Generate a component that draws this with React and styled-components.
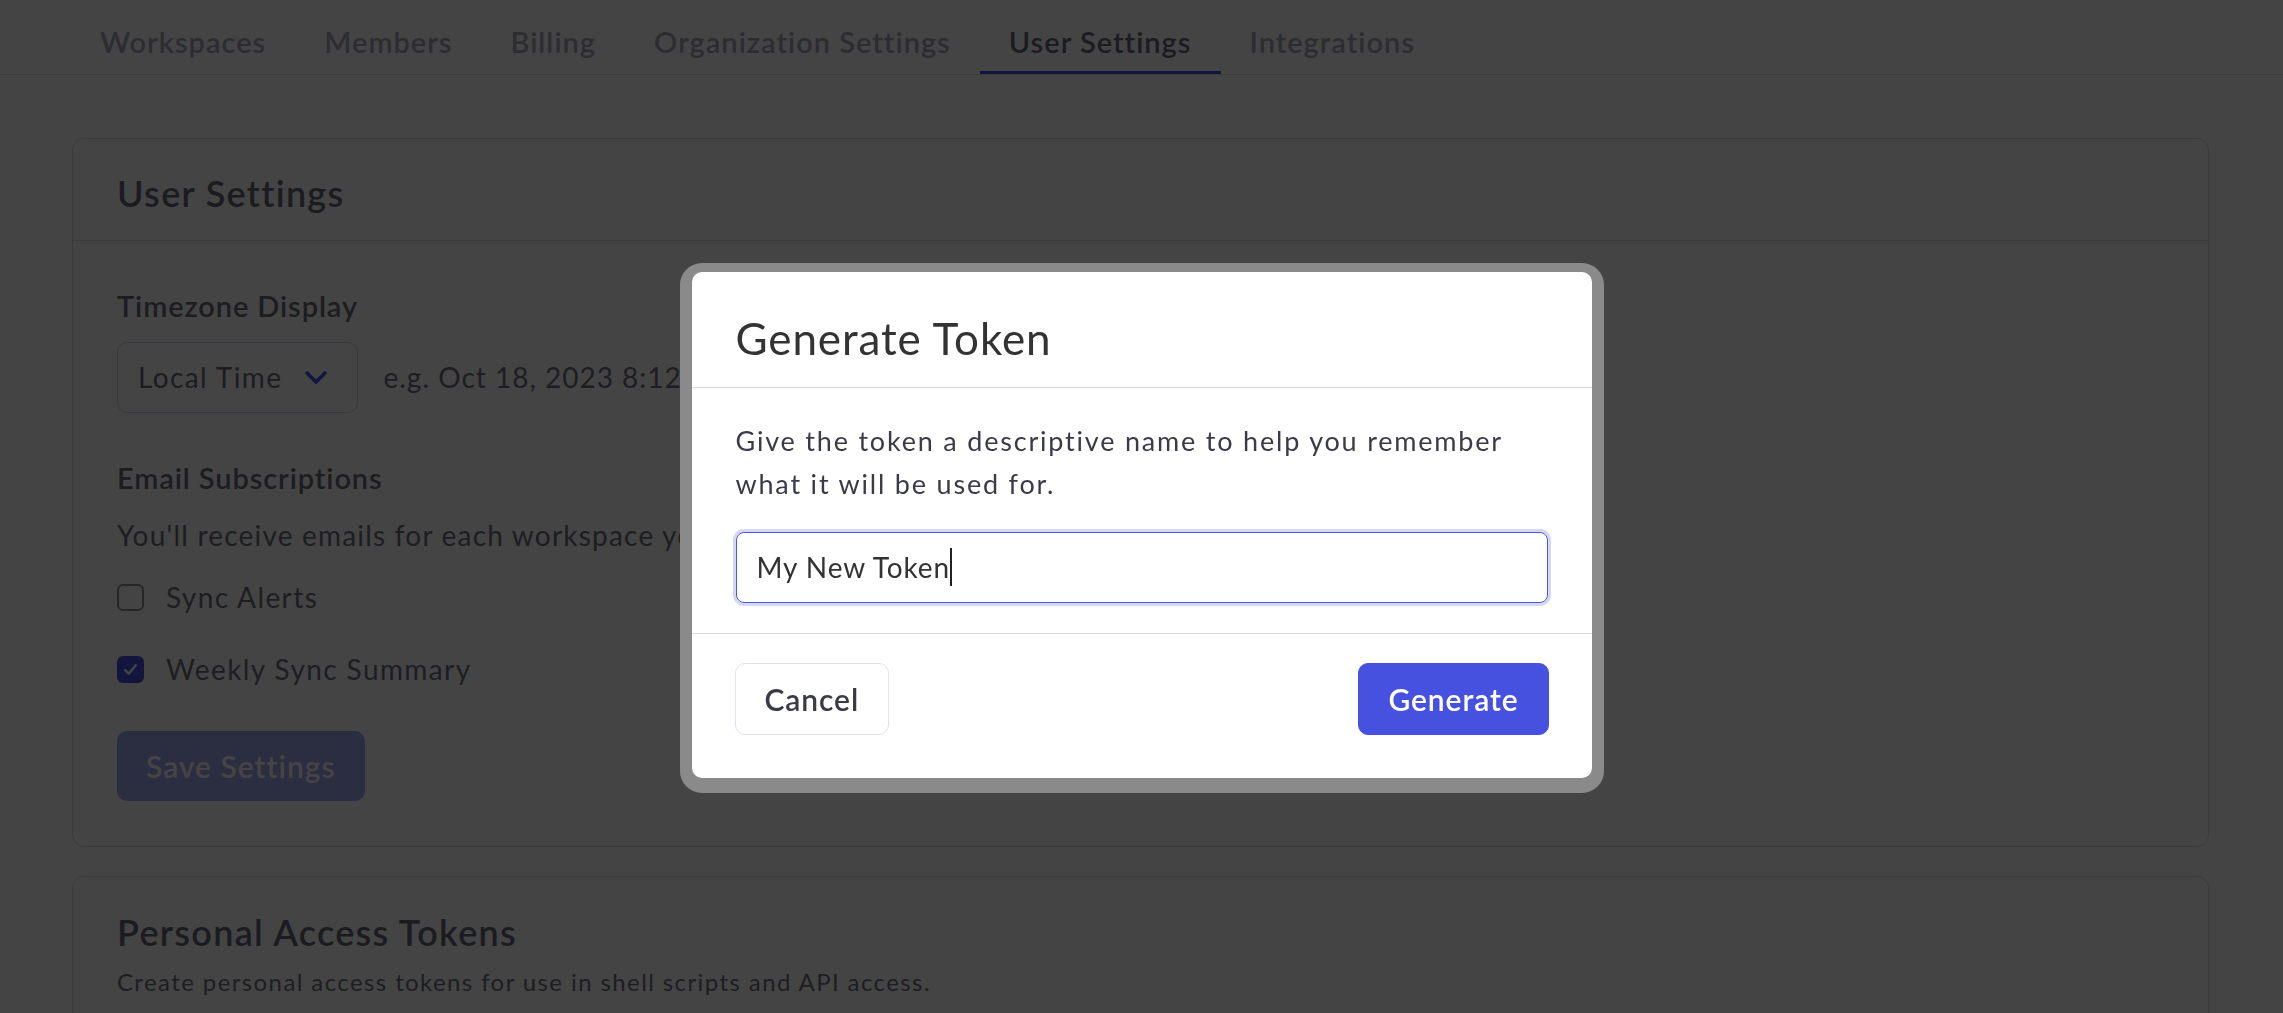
import React from "react";
import styled, { createGlobalStyle } from "styled-components";

const GlobalStyle = createGlobalStyle`
  html, body {
    margin: 0;
    padding: 0;
    background: #ffffff;
    overflow: hidden;
  }
  body {
    font-family: Lato, "Noto Sans", sans-serif;
    color: #717180;
  }
  * {
    box-sizing: border-box;
  }
`;

const tabs = [
  "Workspaces",
  "Members",
  "Billing",
  "Organization Settings",
  "User Settings",
  "Integrations",
];

const ChevronDown = () => (
  <svg width="24" height="15" viewBox="0 0 24 15" fill="none">
    <path
      d="M3 3l9 9 9-9"
      stroke="#4651df"
      strokeWidth="3.6"
      strokeLinecap="round"
      strokeLinejoin="round"
    />
  </svg>
);

const CheckMark = () => (
  <svg width="19" height="19" viewBox="0 0 16 16" fill="none">
    <path
      d="M3.5 8.5l3 3 6-7"
      stroke="#ffffff"
      strokeWidth="2"
      strokeLinecap="round"
      strokeLinejoin="round"
    />
  </svg>
);

const App = () => {
  return (
    <Page>
      <GlobalStyle />
      <TabBar>
        {tabs.map((tab) => (
          <Tab key={tab} $active={tab === "User Settings"}>
            {tab}
          </Tab>
        ))}
      </TabBar>

      <Main>
        <Card>
          <CardHeader $divider>
            <CardTitle>User Settings</CardTitle>
          </CardHeader>
          <CardBody>
            <FieldLabel>Timezone Display</FieldLabel>
            <SelectRow>
              <Select>
                <span>Local Time</span>
                <ChevronDown />
              </Select>
              <Hint>e.g. Oct 18, 2023 8:12 PM</Hint>
            </SelectRow>

            <FieldLabel $spaced>Email Subscriptions</FieldLabel>
            <Text>
              You'll receive emails for each workspace you are a member of.
            </Text>
            <CheckList>
              <CheckRow>
                <Box />
                Sync Alerts
              </CheckRow>
              <CheckRow>
                <Box $checked>
                  <CheckMark />
                </Box>
                Weekly Sync Summary
              </CheckRow>
            </CheckList>
            <SaveButton disabled>Save Settings</SaveButton>
          </CardBody>
        </Card>

        <Card>
          <CardHeader $tight>
            <CardTitle>Personal Access Tokens</CardTitle>
            <Subtitle>
              Create personal access tokens for use in shell scripts and API
              access.
            </Subtitle>
          </CardHeader>
          <TokenList />
        </Card>
      </Main>

      <Overlay>
        <Dialog>
          <DialogHeader>
            <DialogTitle>Generate Token</DialogTitle>
          </DialogHeader>
          <DialogBody>
            <DialogText>
              Give the token a descriptive name to help you remember what it
              will be used for.
            </DialogText>
            <TokenField>
              My New Token
              <Caret />
            </TokenField>
          </DialogBody>
          <DialogFooter>
            <Button>Cancel</Button>
            <Button $primary>Generate</Button>
          </DialogFooter>
        </Dialog>
      </Overlay>
    </Page>
  );
};

const Page = styled.div`
  min-height: 100vh;
  background: #ffffff;
`;

const TabBar = styled.nav`
  display: flex;
  height: 75px;
  padding-left: 71px;
  border-bottom: 1px solid #e1e1e1;
`;

const Tab = styled.a`
  display: block;
  padding: 25px 29px 0;
  font-size: 29px;
  line-height: 1.2;
  font-weight: 600;
  letter-spacing: 1px;
  cursor: pointer;
  color: ${(p) => (p.$active ? "#6a6a78" : "#a8a8b8")};
  border-bottom: 3px solid ${(p) => (p.$active ? "#4651df" : "transparent")};
`;

const Main = styled.main`
  display: flex;
  flex-direction: column;
  gap: 29px;
  padding: 63px 74px 40px 72px;
`;

const Card = styled.section`
  background: #ffffff;
  border: 1px solid #dedee4;
  border-radius: 12px;
`;

const CardHeader = styled.header`
  padding: ${(p) => (p.$tight ? "34px 44px 24px" : "33px 44px 25px")};
  border-bottom: ${(p) => (p.$divider ? "1px solid #dedee4" : "none")};
`;

const CardTitle = styled.h2`
  margin: 0;
  font-size: 36px;
  line-height: 1.2;
  font-weight: 600;
  letter-spacing: 1.3px;
  color: #6a6a78;
`;

const Subtitle = styled.p`
  margin: 13px 0 0;
  font-size: 24px;
  line-height: 1.2;
  letter-spacing: 1.4px;
  color: #717180;
`;

const CardBody = styled.div`
  display: flex;
  flex-direction: column;
  align-items: flex-start;
  padding: 48px 44px 45px;
`;

const TokenList = styled.div`
  min-height: 200px;
`;

const FieldLabel = styled.h3`
  margin: ${(p) => (p.$spaced ? "48px 0 0" : "0")};
  font-size: 29px;
  line-height: 1.2;
  font-weight: 600;
  letter-spacing: 0.9px;
  color: #6c6c7a;
`;

const SelectRow = styled.div`
  display: flex;
  align-items: center;
  gap: 25px;
  margin-top: 18px;
`;

const Select = styled.div`
  display: flex;
  align-items: center;
  gap: 22px;
  height: 71px;
  padding: 0 29px 0 20px;
  border: 1px solid #d6d6ea;
  border-radius: 10px;
  font-size: 28px;
  line-height: 1.2;
  letter-spacing: 1.4px;
  color: #6c6c7a;
`;

const Hint = styled.span`
  font-size: 28px;
  line-height: 1.2;
  letter-spacing: 1px;
  color: #717180;
`;

const Text = styled.p`
  margin: 23px 0 0;
  font-size: 28px;
  line-height: 1.2;
  letter-spacing: 1.2px;
  color: #717180;
`;

const CheckList = styled.div`
  display: flex;
  flex-direction: column;
  gap: 40px;
  margin-top: 29px;
`;

const CheckRow = styled.label`
  display: flex;
  align-items: center;
  gap: 22px;
  height: 32px;
  font-size: 28px;
  line-height: 1.2;
  letter-spacing: 1.4px;
  color: #717180;
`;

const Box = styled.span`
  display: flex;
  align-items: center;
  justify-content: center;
  width: 27px;
  height: 27px;
  border-radius: 6px;
  border: ${(p) => (p.$checked ? "none" : "2.5px solid #8e8e90")};
  background: ${(p) => (p.$checked ? "#4651df" : "#ffffff")};
`;

const SaveButton = styled.button`
  margin-top: 46px;
  height: 70px;
  padding: 0 29px;
  border: none;
  border-radius: 10px;
  background: #4651df;
  opacity: ${(p) => (p.disabled ? 0.5 : 1)};
  font-family: inherit;
  font-size: 30px;
  font-weight: 600;
  letter-spacing: 1px;
  color: #ffffff;
`;

const Overlay = styled.div`
  position: fixed;
  inset: 0;
  display: flex;
  justify-content: center;
  align-items: flex-start;
  padding-top: 272px;
  background: rgba(0, 0, 0, 0.733);
`;

const Dialog = styled.div`
  width: 900px;
  background: #ffffff;
  border-radius: 10px;
  box-shadow: 0 3px 0 12px #8a8a8a;
  overflow: hidden;
`;

const DialogHeader = styled.div`
  padding: 40px 44px 22px;
  border-bottom: 1px solid #dadada;
`;

const DialogTitle = styled.h2`
  margin: 0;
  font-size: 44px;
  line-height: 1.2;
  font-weight: 400;
  letter-spacing: 0.9px;
  color: #333333;
`;

const DialogBody = styled.div`
  padding: 31px 44px 30px;
`;

const DialogText = styled.p`
  margin: 0 0 27px;
  font-size: 27px;
  line-height: 43px;
  letter-spacing: 1.8px;
  color: #3b3b48;
`;

const TokenField = styled.div`
  display: flex;
  align-items: center;
  height: 71px;
  padding-left: 20px;
  border: 1.5px solid #4a56dc;
  border-radius: 8px;
  box-shadow: 0 0 0 3px #d4d7f6;
  font-size: 28px;
  letter-spacing: 0.9px;
  color: #333333;
`;

const Caret = styled.span`
  display: inline-block;
  width: 2px;
  height: 38px;
  background: #222222;
`;

const DialogFooter = styled.div`
  display: flex;
  justify-content: space-between;
  padding: 29px 43px 43px;
  border-top: 1px solid #dadada;
`;

const Button = styled.button`
  height: 72px;
  padding: 0 29px;
  border-radius: 10px;
  border: 1px solid ${(p) => (p.$primary ? "#4651df" : "#e2e2ee")};
  background: ${(p) => (p.$primary ? "#4651df" : "#ffffff")};
  color: ${(p) => (p.$primary ? "#ffffff" : "#3b3b45")};
  font-family: inherit;
  font-size: 30px;
  font-weight: 600;
  letter-spacing: 0.9px;
  cursor: pointer;
`;

export default App;
